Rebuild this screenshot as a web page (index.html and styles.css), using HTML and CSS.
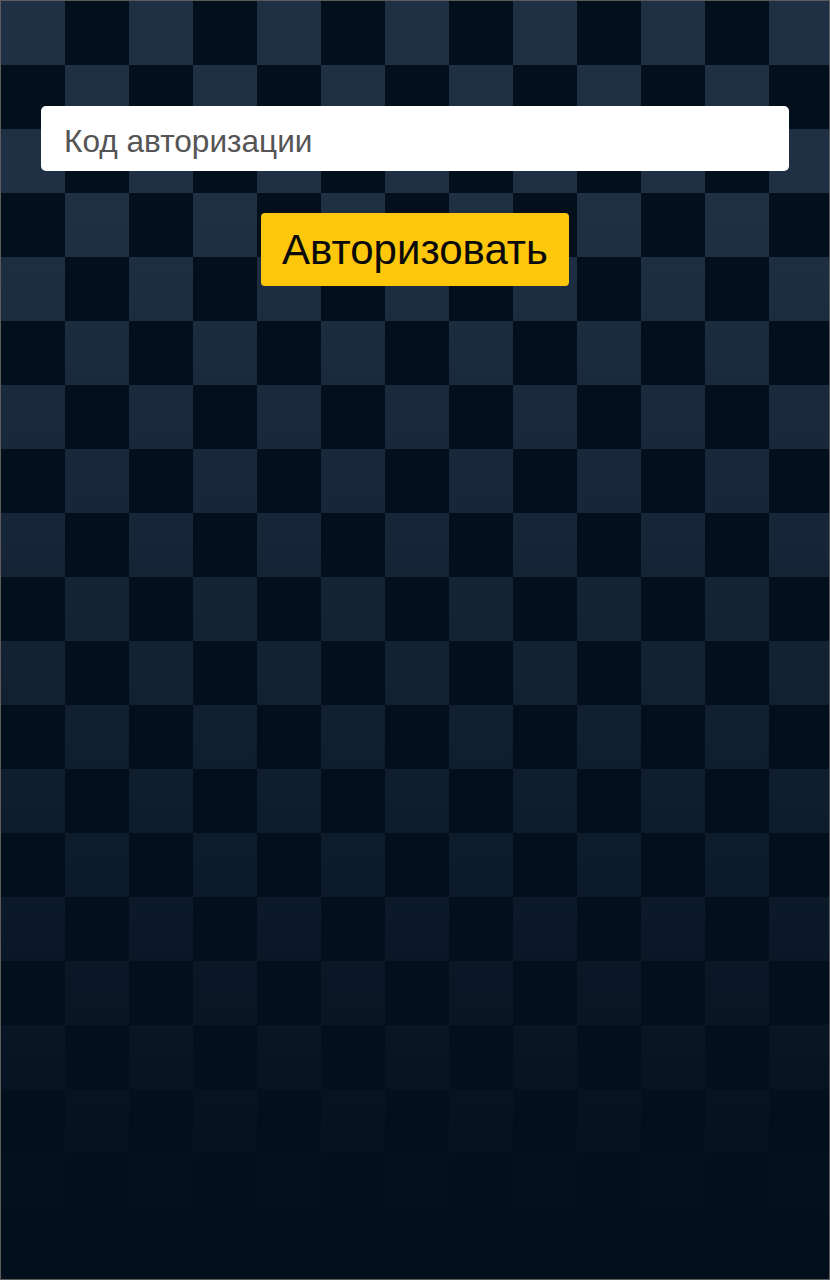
FILE: index.html
```html
<!DOCTYPE html>
<html lang="ru">
<head>
<meta charset="utf-8">
<link rel="stylesheet" href="styles.css">
</head>
<body>
<div class="page">
  <form class="auth">
    <input class="code" type="text" placeholder="Код авторизации">
    <button class="submit" type="button">Авторизовать</button>
  </form>
</div>
</body>
</html>
```
FILE: styles.css
```css
html, body {
  margin: 0;
  padding: 0;
  height: 100%;
}
body {
  background: #040f1c;
}
.page {
  box-sizing: border-box;
  height: 1280px;
  border: 1px solid #5c5c5c;
  background-color: #040f1c;
  background-image:
    linear-gradient(to bottom, rgba(4,15,28,0) 0px, rgba(4,15,28,0) 200px, rgba(4,15,28,1) 1220px),
    conic-gradient(#040f1c 0 25%, #1f3044 0 50%, #040f1c 0 75%, #1f3044 0);
  background-size: 100% 100%, 128px 128px;
  background-position: 0 0, 0 0;
  padding: 105px 40px 0 40px;
  font-family: "Liberation Sans", Arial, sans-serif;
}
.auth {
  display: flex;
  flex-direction: column;
  align-items: center;
  gap: 42px;
}
.code {
  box-sizing: border-box;
  width: 100%;
  height: 65px;
  border: none;
  border-radius: 5px;
  background: #fff;
  padding: 6px 23px 0 23px;
  font-family: "Liberation Sans", Arial, sans-serif;
  font-size: 31.6px;
  color: #555555;
  outline: none;
}
.code::placeholder {
  color: #555555;
  opacity: 1;
}
.submit {
  box-sizing: border-box;
  height: 73px;
  padding: 0 21px;
  border: none;
  border-radius: 4px;
  background: #fdc70c;
  color: #0a0a0a;
  font-family: "Liberation Sans", Arial, sans-serif;
  font-size: 42px;
  cursor: pointer;
}
```
